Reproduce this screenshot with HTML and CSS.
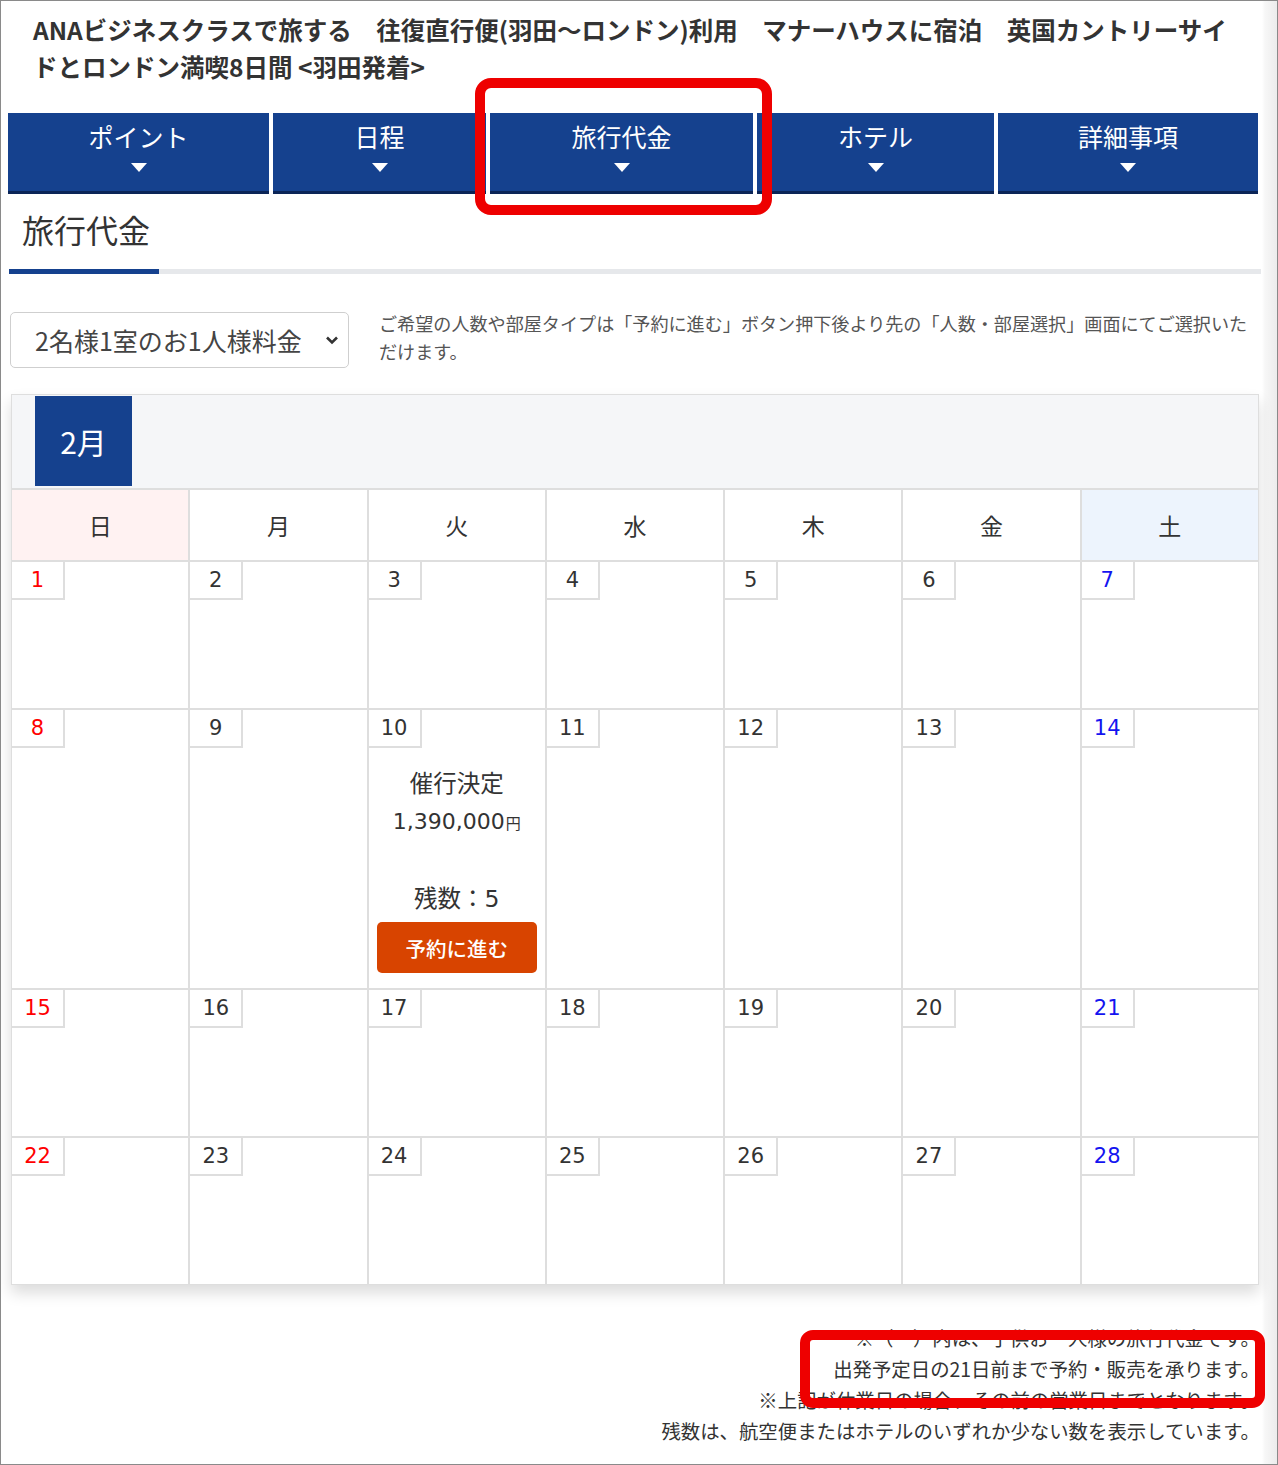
FILE: index.html
```html
<!DOCTYPE html>
<html lang="ja">
  <head>
    <meta charset="UTF-8" />
    <meta name="viewport" content="width=device-width, initial-scale=1.0" />
    <title>旅行代金 | ANAビジネスクラスで旅する</title>
    <link rel="stylesheet" href="styles.css">
  </head>
  <body>
    <div class="frame">
      <div class="page">
        <h1 class="tour-title">ANAビジネスクラスで旅する　往復直行便(羽田～ロンドン)利用　マナーハウスに宿泊　英国カントリーサイドとロンドン満喫8日間 &lt;羽田発着&gt;</h1>

        <nav class="tabs">
          <a class="tab" href="#point">ポイント<span class="caret"></span></a>
          <a class="tab" href="#schedule">日程<span class="caret"></span></a>
          <a class="tab current" href="#price">旅行代金<span class="caret"></span></a>
          <a class="tab" href="#hotel">ホテル<span class="caret"></span></a>
          <a class="tab" href="#detail">詳細事項<span class="caret"></span></a>
        </nav>

        <section id="price">
          <h2 class="sec-title">旅行代金</h2>

          <div class="options">
            <label class="select-wrap">
              <select class="room-select">
                <option>2名様1室のお1人様料金</option>
                <option>1名様1室のお1人様料金</option>
              </select>
              <svg class="chev" width="14" height="10" viewBox="0 0 14 10"><path d="M2 2.5 L7 7.5 L12 2.5" fill="none" stroke="#333" stroke-width="2.6"/></svg>
            </label>
            <p class="options-note">ご希望の人数や部屋タイプは「予約に進む」ボタン押下後より先の「人数・部屋選択」画面にてご選択いただけます。</p>
          </div>

          <div class="calendar">
            <div class="cal-head">
              <span class="month">2月</span>
            </div>
            <div class="cal-grid">
              <div class="dow sun">日</div>
              <div class="dow">月</div>
              <div class="dow">火</div>
              <div class="dow">水</div>
              <div class="dow">木</div>
              <div class="dow">金</div>
              <div class="dow sat">土</div>

              <div class="day sun"><span class="num">1</span></div>
              <div class="day"><span class="num">2</span></div>
              <div class="day"><span class="num">3</span></div>
              <div class="day"><span class="num">4</span></div>
              <div class="day"><span class="num">5</span></div>
              <div class="day"><span class="num">6</span></div>
              <div class="day sat"><span class="num">7</span></div>

              <div class="day sun"><span class="num">8</span></div>
              <div class="day"><span class="num">9</span></div>
              <div class="day">
                <span class="num">10</span>
                <div class="plan">
                  <p>催行決定</p>
                  <p class="fare">1,390,000<small>円</small></p>
                  <p>&nbsp;</p>
                  <p>残数：5</p>
                  <a class="book" href="#book">予約に進む</a>
                </div>
              </div>
              <div class="day"><span class="num">11</span></div>
              <div class="day"><span class="num">12</span></div>
              <div class="day"><span class="num">13</span></div>
              <div class="day sat"><span class="num">14</span></div>

              <div class="day sun"><span class="num">15</span></div>
              <div class="day"><span class="num">16</span></div>
              <div class="day"><span class="num">17</span></div>
              <div class="day"><span class="num">18</span></div>
              <div class="day"><span class="num">19</span></div>
              <div class="day"><span class="num">20</span></div>
              <div class="day sat"><span class="num">21</span></div>

              <div class="day sun"><span class="num">22</span></div>
              <div class="day"><span class="num">23</span></div>
              <div class="day"><span class="num">24</span></div>
              <div class="day"><span class="num">25</span></div>
              <div class="day"><span class="num">26</span></div>
              <div class="day"><span class="num">27</span></div>
              <div class="day sat"><span class="num">28</span></div>
            </div>
          </div>

          <div class="notes">
            <p>※（　）内は、子供お一人様の旅行代金です。</p>
            <p>出発予定日の21日前まで予約・販売を承ります。</p>
            <p>※上記が休業日の場合、その前の営業日までとなります。</p>
            <p>残数は、航空便またはホテルのいずれか少ない数を表示しています。</p>
          </div>
        </section>
      </div>

      <!-- red call-out frames drawn over the capture -->
      <span class="mark mark-tab"></span>
      <span class="mark mark-note"></span>
    </div>
  </body>
</html>
```

FILE: styles.css
```css
:root {
  --navy: #15418e;
  --navy-dark: #0b2557;
  --line: #dedede;
  --text: #333;
  --mark: #ee0000;
  --jp: "Noto Sans CJK JP", sans-serif;
  --num: "DejaVu Sans", "Noto Sans CJK JP", sans-serif;
}
* {
  box-sizing: border-box;
}
body {
  margin: 0;
  font-family: var(--jp);
  color: var(--text);
  background: #fff;
}
p {
  margin: 0;
}
.frame {
  position: relative;
  width: 1278px;
  height: 1465px;
  border: 1px solid #8a8a8a;
  background: linear-gradient(to left, #ececec 0, #f7f7f7 12px, #fff 15px);
  overflow: hidden;
}
.page {
  padding: 0 16px 0 8px;
}

/* title */
.tour-title {
  margin: 0;
  padding: 10px 0 0 24px;
  width: 1234px;
  font-size: 24.5px;
  font-weight: 700;
  line-height: 37px;
  color: #333;
}

/* tabs */
.tabs {
  display: grid;
  grid-template-columns: 261px 213px 263px 237px 260px;
  column-gap: 4px;
  margin: 28px 0 0 -1px;
}
.tab {
  display: flex;
  flex-direction: column;
  align-items: center;
  height: 81px;
  padding-top: 6px;
  background: var(--navy);
  border-bottom: 3px solid var(--navy-dark);
  color: #fff;
  text-decoration: none;
  font-size: 25px;
  line-height: 34px;
}
.caret {
  margin-top: 10px;
  width: 0;
  height: 0;
  border-left: 8px solid transparent;
  border-right: 8px solid transparent;
  border-top: 9px solid #fff;
}

/* section title */
.sec-title {
  position: relative;
  margin: 11px 0 0;
  padding: 0 0 16px 13px;
  font-size: 32px;
  font-weight: 400;
  line-height: 48px;
  color: #333;
  border-bottom: 5px solid #e6e8eb;
}
.sec-title::after {
  content: "";
  position: absolute;
  left: 0;
  bottom: -5px;
  width: 150px;
  height: 5px;
  background: var(--navy);
}

/* options row */
.options {
  display: flex;
  align-items: flex-start;
  gap: 30px;
  margin-top: 35px;
  padding-left: 1px;
}
.select-wrap {
  position: relative;
  flex: none;
  margin-top: 3px;
}
.room-select {
  appearance: none;
  -webkit-appearance: none;
  width: 339px;
  height: 56px;
  padding: 0 40px 0 24px;
  border: 1px solid #cfcfcf;
  border-radius: 5px;
  background: #fff;
  font-family: var(--jp);
  font-size: 25px;
  color: #444;
}
.chev {
  position: absolute;
  right: 10px;
  top: 23px;
  pointer-events: none;
}
.options-note {
  font-size: 18.1px;
  line-height: 28px;
  color: #555;
  padding-right: 6px;
}

/* calendar */
.calendar {
  margin: 26px 2px 0 2px;
  border: 1px solid var(--line);
  background: #fff;
  box-shadow: 0 8px 14px rgba(0, 0, 0, 0.14);
}
.cal-head {
  height: 94px;
  padding: 1px 0 0 23px;
  background: #f5f6f8;
  border-bottom: 1px solid var(--line);
}
.month {
  display: flex;
  align-items: center;
  justify-content: center;
  width: 97px;
  height: 90px;
  background: var(--navy);
  color: #fff;
  font-size: 30px;
}
.cal-grid {
  display: grid;
  grid-template-columns: repeat(7, 1fr);
  grid-template-rows: 70px 146px 278px 146px 146px;
  gap: 2px;
  background: var(--line);
  border-top: 1px solid var(--line);
}
.dow {
  display: flex;
  align-items: center;
  justify-content: center;
  background: #fff;
  font-size: 23px;
  color: #333;
}
.dow.sun {
  background: #fff2f2;
}
.dow.sat {
  background: #edf4fd;
}
.day {
  background: #fff;
}
.num {
  display: block;
  width: 53px;
  height: 38px;
  border-right: 2px solid var(--line);
  border-bottom: 2px solid var(--line);
  font-family: var(--num);
  font-size: 21px;
  line-height: 36px;
  text-align: center;
  color: #333;
}
.day.sun .num {
  color: #ff0000;
}
.day.sat .num {
  color: #1414f0;
}
.plan {
  display: flex;
  flex-direction: column;
  align-items: center;
  margin-top: 17px;
  font-family: var(--num);
  font-size: 23.5px;
  line-height: 38px;
  color: #333;
}
.fare {
  font-size: 22px;
}
.fare small {
  font-family: var(--jp);
  font-size: 15px;
  margin-left: 1px;
}
.book {
  display: flex;
  align-items: center;
  justify-content: center;
  width: 160px;
  height: 51px;
  margin-top: 4px;
  border-radius: 5px;
  background: #d84400;
  color: #fff;
  text-decoration: none;
  font-family: var(--jp);
  font-size: 20.5px;
  font-weight: 500;
}

/* notes */
.notes {
  margin-top: 37px;
  padding-right: 1px;
  text-align: right;
  font-size: 19.4px;
  line-height: 31px;
  color: #333;
}

/* call-out frames */
.mark {
  position: absolute;
  border: 10px solid var(--mark);
  border-radius: 16px;
}
.mark-tab {
  left: 474px;
  top: 77px;
  width: 297px;
  height: 137px;
}
.mark-note {
  left: 799px;
  top: 1329px;
  width: 465px;
  height: 78px;
  border-radius: 13px;
}
```
